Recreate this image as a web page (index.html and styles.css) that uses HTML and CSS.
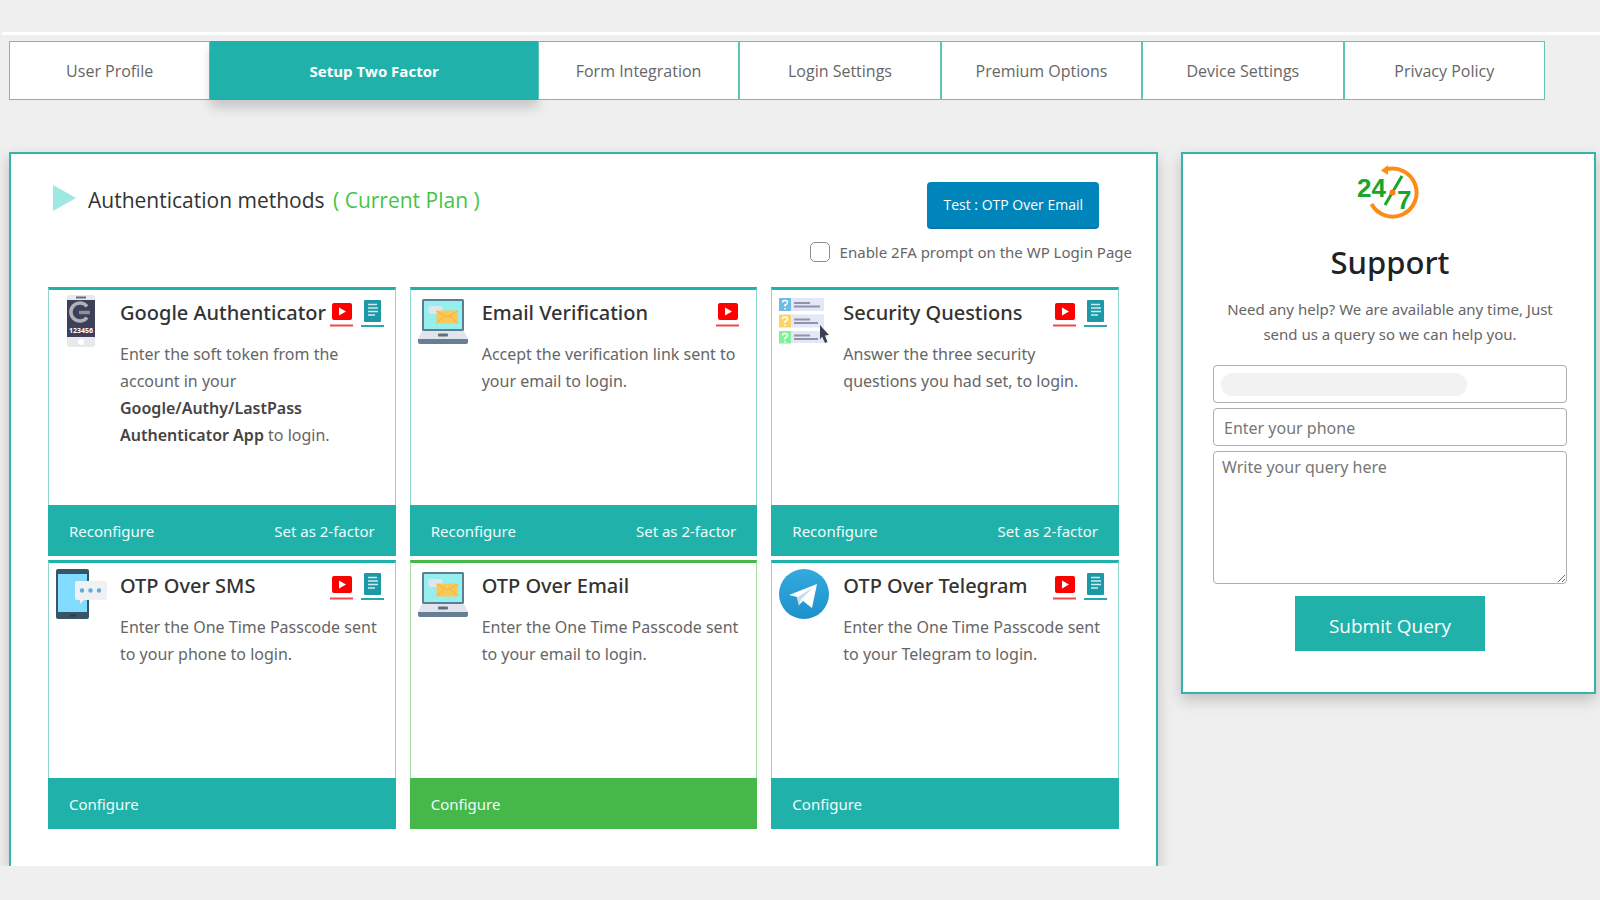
FILE: index.html
```html
<!DOCTYPE html>
<html lang="en">
<head>
<meta charset="utf-8">
<title>Two Factor Authentication</title>
<link rel="stylesheet" href="styles.css">
</head>
<body>
<svg class="sprite" aria-hidden="true">
  <symbol id="i-play" viewBox="0 0 24 28">
    <rect x="2" y="3" width="20" height="17" rx="2" fill="#fe0000"/>
    <path d="M9 7.500v8l7-4z" fill="#fff"/>
    <path d="M0 25.500h23" stroke="#ee4a4a" stroke-width="2"/>
  </symbol>
  <symbol id="i-doc" viewBox="0 0 24 28">
    <rect x="3" y="0" width="17" height="22" rx="1" fill="#1d98a7"/>
    <path d="M7 4.500h9M7 8h10M7 11.500h10M7 15h7" stroke="#c9eef0" stroke-width="1.500"/>
    <path d="M0 26h23" stroke="#2ba5ae" stroke-width="2"/>
  </symbol>
  <symbol id="i-laptop" viewBox="0 0 50 50">
    <rect x="4" y="3" width="42" height="32" rx="1.500" fill="#5f7d8e"/>
    <rect x="6" y="5" width="38" height="28" fill="#94efee"/>
    <rect x="10.500" y="10" width="14" height="8" rx="2" fill="#e0e6ee"/>
    <rect x="18.500" y="14.500" width="21.500" height="13" fill="#fbc757"/>
    <path d="M18.500 15l11 6 10.500-6M18.500 27l8-7M40 27l-8-7" stroke="#efb545" fill="none"/>
    <path d="M4 35h42l4 8H0z" fill="#e0e4ee"/>
    <rect x="20" y="37.500" width="10" height="3" rx="1" fill="#5f7080"/>
    <path d="M0 43h50v3q0 2-2 2H2q-2 0-2-2z" fill="#667f91"/>
  </symbol>
</svg>

<nav class="tabs" aria-label="Sections">
  <a class="tab" href="#profile">User Profile</a>
  <a class="tab tab-active" href="#setup" aria-current="page">Setup Two Factor</a>
  <a class="tab" href="#form">Form Integration</a>
  <a class="tab" href="#login">Login Settings</a>
  <a class="tab" href="#premium">Premium Options</a>
  <a class="tab" href="#device">Device Settings</a>
  <a class="tab" href="#privacy">Privacy Policy</a>
</nav>

<div class="content">
  <main class="panel methods">
    <header class="methods-head">
      <h1 class="methods-title">
        <svg class="marker" viewBox="0 0 23 26" aria-hidden="true"><path d="M0 0v26l23-13z" fill="#9fe8e1"/></svg>
        <span>Authentication methods <a class="plan" href="#plan">( Current Plan )</a></span>
      </h1>
      <div class="methods-actions">
        <button class="btn-test" type="button">Test : OTP Over Email</button>
        <label class="prompt"><input class="check" type="checkbox">Enable 2FA prompt on the WP Login Page</label>
      </div>
    </header>

    <div class="cards">
      <article class="card">
        <div class="card-body">
          <svg class="card-icon" viewBox="0 0 50 50" aria-hidden="true">
            <rect x="11" y="-1" width="28" height="52" rx="3" fill="#e6eaec"/>
            <path d="M20 1.500h10" stroke="#666b75" stroke-width="2"/>
            <rect x="11" y="4" width="28" height="37" fill="#3d4058"/>
            <path d="M31 10.500A9 9 0 1 0 31 21.500" fill="none" stroke="#aeb2b6" stroke-width="3.500"/>
            <path d="M23 16.500h11" stroke="#8b9096" stroke-width="3.500"/>
            <text class="token" x="25" y="37" text-anchor="middle">123456</text>
            <circle cx="25" cy="46" r="3" fill="#fff"/>
          </svg>
          <div class="card-text">
            <div class="card-top">
              <h2 class="card-title">Google Authenticator</h2>
              <a class="help" href="#video" aria-label="Video guide"><svg class="help-icon"><use href="#i-play"/></svg></a>
              <a class="help" href="#guide" aria-label="Setup guide"><svg class="help-icon"><use href="#i-doc"/></svg></a>
            </div>
            <p class="card-desc">Enter the soft token from the account in your <b>Google/Authy/LastPass</b> <b>Authenticator App</b> to login.</p>
          </div>
        </div>
        <footer class="card-foot"><button class="card-btn" type="button">Reconfigure</button><button class="card-btn" type="button">Set as 2-factor</button></footer>
      </article>

      <article class="card">
        <div class="card-body">
          <svg class="card-icon" aria-hidden="true"><use href="#i-laptop"/></svg>
          <div class="card-text">
            <div class="card-top">
              <h2 class="card-title">Email Verification</h2>
              <a class="help" href="#video" aria-label="Video guide"><svg class="help-icon"><use href="#i-play"/></svg></a>
            </div>
            <p class="card-desc">Accept the verification link sent to your email to login.</p>
          </div>
        </div>
        <footer class="card-foot"><button class="card-btn" type="button">Reconfigure</button><button class="card-btn" type="button">Set as 2-factor</button></footer>
      </article>

      <article class="card">
        <div class="card-body">
          <svg class="card-icon" viewBox="0 -2 50 50" aria-hidden="true">
            <path d="M12 0h33v13H12zM12 16.500h33v13H12zM12 33h33v12H12z" fill="#e4e7f6"/>
            <rect x="0" y="0" width="12" height="13" fill="#6fbbe8"/>
            <rect x="0" y="16.500" width="12" height="13" fill="#fbd36b"/>
            <rect x="0" y="33" width="12" height="12.500" fill="#85f09a"/>
            <path d="M3.500 4.500q0-2 2.500-2t2.500 2q0 1.500-2.500 2.500v1.500M6 10v1.500M3.500 21q0-2 2.500-2t2.500 2q0 1.500-2.500 2.500V25M6 26.500V28M3.500 37.500q0-2 2.500-2t2.500 2q0 1.500-2.500 2.500v1.500M6 43v1.500" fill="none" stroke="#fff" stroke-width="1.500"/>
            <path d="M15 5h16M15 8.500h26M15 21.500h16M15 25h24M15 37.500h16M15 41h24" stroke="#8f93ab" stroke-width="2"/>
            <path d="M41 27l9 10-4 .5 2.500 6.500-2.500 1-3-6.500-2 3z" fill="#3c4152"/>
          </svg>
          <div class="card-text">
            <div class="card-top">
              <h2 class="card-title">Security Questions</h2>
              <a class="help" href="#video" aria-label="Video guide"><svg class="help-icon"><use href="#i-play"/></svg></a>
              <a class="help" href="#guide" aria-label="Setup guide"><svg class="help-icon"><use href="#i-doc"/></svg></a>
            </div>
            <p class="card-desc">Answer the three security questions you had set, to login.</p>
          </div>
        </div>
        <footer class="card-foot"><button class="card-btn" type="button">Reconfigure</button><button class="card-btn" type="button">Set as 2-factor</button></footer>
      </article>

      <article class="card">
        <div class="card-body">
          <svg class="card-icon" viewBox="0 0 50 50" aria-hidden="true">
            <rect x="0" y="0" width="33" height="50" rx="2" fill="#375566"/>
            <rect x="2" y="5" width="29" height="38" fill="#82dcff"/>
            <path d="M14 46.500h6" stroke="#263f4e" stroke-width="2"/>
            <path d="M21 12h28q2 0 2 2v15q0 2-2 2H28l-4 4v-4h-3q-2 0-2-2V14q0-2 2-2z" fill="#f1f1f3"/>
            <circle cx="26" cy="21.500" r="2.200" fill="#5aaede"/><circle cx="34.500" cy="21.500" r="2.200" fill="#5aaede"/><circle cx="43" cy="21.500" r="2.200" fill="#5aaede"/>
          </svg>
          <div class="card-text">
            <div class="card-top">
              <h2 class="card-title">OTP Over SMS</h2>
              <a class="help" href="#video" aria-label="Video guide"><svg class="help-icon"><use href="#i-play"/></svg></a>
              <a class="help" href="#guide" aria-label="Setup guide"><svg class="help-icon"><use href="#i-doc"/></svg></a>
            </div>
            <p class="card-desc">Enter the One Time Passcode sent to your phone to login.</p>
          </div>
        </div>
        <footer class="card-foot"><button class="card-btn" type="button">Configure</button></footer>
      </article>

      <article class="card card-current">
        <div class="card-body">
          <svg class="card-icon" aria-hidden="true"><use href="#i-laptop"/></svg>
          <div class="card-text">
            <div class="card-top">
              <h2 class="card-title">OTP Over Email</h2>
            </div>
            <p class="card-desc">Enter the One Time Passcode sent to your email to login.</p>
          </div>
        </div>
        <footer class="card-foot"><button class="card-btn" type="button">Configure</button></footer>
      </article>

      <article class="card">
        <div class="card-body">
          <svg class="card-icon" viewBox="0 0 50 50" aria-hidden="true">
            <defs><linearGradient id="tg" x1="0" y1="0" x2="0" y2="1"><stop offset="0" stop-color="#35aadd"/><stop offset="1" stop-color="#1c90cc"/></linearGradient></defs>
            <circle cx="25" cy="25" r="25" fill="url(#tg)"/>
            <path d="M10 26l28-11-5 24-9-7-4 4-2-8z" fill="#fff"/>
            <path d="M18 28.500L34 18.500 22 30.500 20 37z" fill="#c5dcec"/>
          </svg>
          <div class="card-text">
            <div class="card-top">
              <h2 class="card-title">OTP Over Telegram</h2>
              <a class="help" href="#video" aria-label="Video guide"><svg class="help-icon"><use href="#i-play"/></svg></a>
              <a class="help" href="#guide" aria-label="Setup guide"><svg class="help-icon"><use href="#i-doc"/></svg></a>
            </div>
            <p class="card-desc">Enter the One Time Passcode sent to your Telegram to login.</p>
          </div>
        </div>
        <footer class="card-foot"><button class="card-btn" type="button">Configure</button></footer>
      </article>
    </div>
  </main>

  <aside class="panel support">
    <svg class="support-logo" viewBox="1 0 64 54" role="img" aria-label="24/7">
      <path d="M29 3.500A24 24 0 1 1 14.500 38" fill="none" stroke="#ff8b17" stroke-width="4"/>
      <path d="M24 4.500L31-1v10z" fill="#ff8b17"/>
      <text class="logo-num" x="0" y="31">24</text>
      <text class="logo-num" x="40" y="43">7</text>
      <path d="M45 10L28 39" stroke="#1ba526" stroke-width="3"/>
      <circle cx="35.500" cy="26.500" r="3" fill="#ff7d17"/>
    </svg>
    <h2 class="support-title">Support</h2>
    <p class="support-note">Need any help? We are available any time, Just send us a query so we can help you.</p>
    <form class="form">
      <div class="field-wrap">
        <input class="field" type="email" aria-label="Email">
        <span class="mask"></span>
      </div>
      <input class="field" type="tel" placeholder="Enter your phone" aria-label="Phone">
      <textarea class="field query" placeholder="Write your query here" aria-label="Query"></textarea>
      <button class="submit" type="button">Submit Query</button>
    </form>
  </aside>
</div>
</body>
</html>
```
FILE: styles.css
```css
:root {
  --teal: #20b2aa;
  --green: #46b849;
  --text: #666;
  --dark: #333;
  --narrow: "Open Sans", "Noto Sans", sans-serif;
}

* { box-sizing: border-box; }

body {
  margin: 0;
  min-height: 100vh;
  padding: 32px 4px 34px 9px;
  display: flex;
  flex-direction: column;
  background: linear-gradient(#fff, #fff) 2px 32px / 100% 3px no-repeat #efefef;
  color: var(--text);
  font-family: "Noto Sans", "Open Sans", sans-serif;
  font-size: 16px;
}

h1, h2, p { margin: 0; }
button, input, textarea { font: inherit; }
a { color: inherit; text-decoration: none; }

.sprite { position: absolute; width: 0; height: 0; }

.tabs {
  display: flex;
  margin: 9px 51px 52px 0;
}

.tab {
  flex: 201 1 0;
  height: 59px;
  display: flex;
  align-items: center;
  justify-content: center;
  padding-top: 1px;
  border: 1px solid #5cc4b8;
  background: #fff;
  font-family: var(--narrow);
  font-size: 16px;
}

.tab-active {
  flex-grow: 328;
  border-color: var(--teal);
  background: var(--teal);
  color: #fff;
  font-size: 15px;
  font-weight: 700;
  box-shadow: 0 8px 10px rgba(0, 0, 0, 0.16);
}

.content {
  flex: 1;
  display: grid;
  grid-template-columns: 1149fr 415fr;
  gap: 23px;
}

.panel {
  border: 2px solid #35b5aa;
  background: #fff;
  box-shadow: 0 6px 14px rgba(0, 0, 0, 0.2);
}

.methods {
  border-bottom: 0;
  padding: 28px 37px 37px;
  clip-path: inset(-20px -20px 0 -20px);
}

.methods-head {
  display: flex;
  justify-content: space-between;
  margin-right: -13px;
}

.methods-title {
  display: flex;
  gap: 12px;
  align-self: flex-start;
  padding-left: 5px;
  color: var(--dark);
  font-family: var(--narrow);
  font-size: 21px;
  font-weight: 400;
  line-height: 36px;
}

.marker { width: 23px; height: 26px; margin-top: 3px; }
.plan { margin-left: 3px; color: #43c647; }

.methods-actions {
  display: flex;
  flex-direction: column;
  align-items: flex-end;
}

.btn-test {
  height: 47px;
  margin-right: 33px;
  padding: 0 16px 1px;
  border: 0;
  border-bottom: 2px solid #0677ab;
  border-radius: 4px;
  background: #0085ba;
  color: #fff;
  font-family: var(--narrow);
  font-size: 14px;
}

.prompt {
  display: flex;
  align-items: center;
  gap: 10px;
  height: 24px;
  margin: 11px 0 23px;
  font-size: 15px;
}

.check {
  appearance: none;
  width: 20px;
  height: 20px;
  margin: 0;
  border: 1px solid #8c8f94;
  border-radius: 5px;
  background: #fff;
}

.cards {
  display: grid;
  grid-template-columns: repeat(3, 1fr);
  gap: 4px 14px;
}

.card {
  display: flex;
  flex-direction: column;
  min-height: 269px;
  border: 1px solid #8fd6cd;
  border-top: 3px solid var(--teal);
  border-bottom: 0;
}

.card-current { border-color: #a5dca6; border-top-color: var(--green); }

.card-body {
  flex: 1;
  display: flex;
  gap: 14px;
  padding: 6px 6px 6px 7px;
}

.card-icon { flex: none; width: 50px; height: 50px; overflow: visible; }
.token { fill: #fff; font-size: 7px; font-weight: 700; }
.card-text { flex: 1; }

.card-top {
  display: flex;
  height: 40px;
  padding-right: 4px;
}

.card-title {
  flex: 1;
  color: var(--dark);
  font-size: 20px;
  font-weight: 500;
  line-height: 34px;
  white-space: nowrap;
}

.help { margin-top: 4px; padding-left: 7px; }
.help:first-of-type { padding-left: 0; }
.help:only-of-type { padding-right: 6px; }
.help-icon { display: block; width: 24px; height: 28px; }

.card-desc {
  margin-top: 5px;
  font-size: 16px;
  line-height: 27px;
}

.card-desc b { color: #444; font-weight: 600; }

.card-foot {
  display: flex;
  align-items: center;
  justify-content: space-between;
  height: 51px;
  margin: 0 -1px;
  padding: 0 21px;
  background: var(--teal);
}

.card-current .card-foot { background: var(--green); }

.card-btn {
  padding: 0;
  border: 0;
  background: none;
  color: #eefcfb;
  font-size: 15px;
}

.support {
  align-self: start;
  display: flex;
  flex-direction: column;
  align-items: center;
  padding: 12px 27px 41px 30px;
  text-align: center;
}

.support-logo { width: 64px; height: 54px; overflow: visible; }
.logo-num { fill: #1ba526; font-family: "Liberation Sans", sans-serif; font-size: 26px; font-weight: 700; }

.support-title {
  margin-top: 21px;
  color: #1d2327;
  font-size: 31px;
  font-weight: 500;
  line-height: 42px;
}

.support-note {
  margin: 14px 0 18px;
  font-size: 15px;
  line-height: 25px;
}

.form {
  align-self: stretch;
  display: flex;
  flex-direction: column;
  gap: 5px;
}

.field-wrap { position: relative; }

.field {
  display: block;
  width: 100%;
  height: 38px;
  padding: 2px 10px 0;
  border: 1px solid #adadad;
  border-radius: 4px;
  background: #fff;
}

.field::placeholder { color: #777; }

.mask {
  position: absolute;
  left: 8px;
  top: 8px;
  width: 246px;
  height: 23px;
  border-radius: 12px;
  background: #f2f2f2;
}

.query { height: 133px; padding: 4px 8px; }

.submit {
  align-self: center;
  height: 55px;
  margin-top: 7px;
  padding: 4px 34px 0;
  border: 0;
  background: var(--teal);
  color: #fff;
  font-family: var(--narrow);
  font-size: 19px;
}
```
